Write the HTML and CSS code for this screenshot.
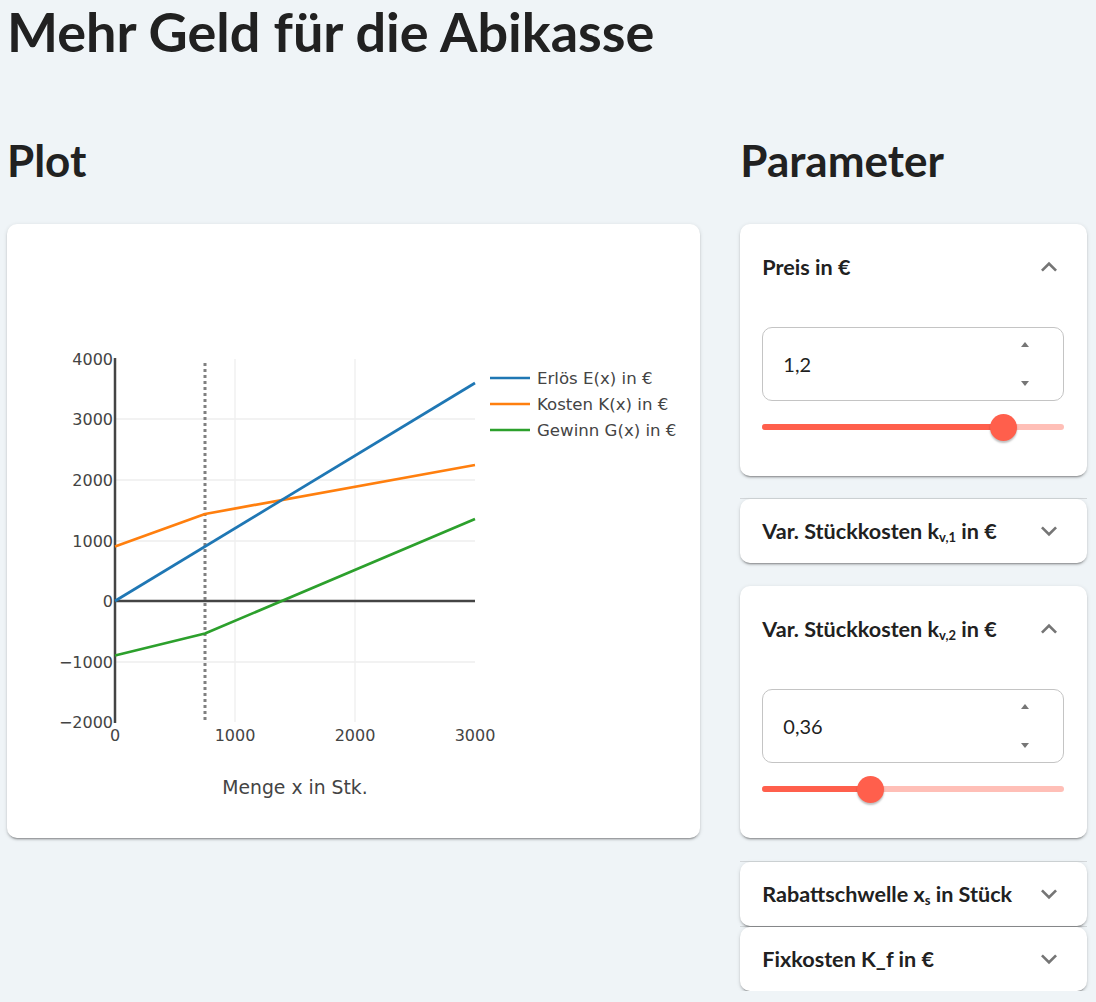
FILE: index.html
```html
<!DOCTYPE html>
<html lang="de">
<head>
<meta charset="utf-8">
<title>Mehr Geld für die Abikasse</title>
<link rel="stylesheet" href="styles.css">
</head>
<body>
<div class="page">
  <h1 class="title">Mehr Geld für die Abikasse</h1>
  <div class="layout">
    <section class="col">
      <h2 class="heading">Plot</h2>
      <div class="plot-card">
        <svg class="plot" width="693" height="614" viewBox="0 0 693 614" xmlns="http://www.w3.org/2000/svg">
          <g transform="translate(-7,-224)">
            <g class="grid">
              <line x1="115" y1="419" x2="475" y2="419"/>
              <line x1="115" y1="480" x2="475" y2="480"/>
              <line x1="115" y1="541" x2="475" y2="541"/>
              <line x1="115" y1="662" x2="475" y2="662"/>
              <line x1="235" y1="359" x2="235" y2="722"/>
              <line x1="355" y1="359" x2="355" y2="722"/>
            </g>
            <line class="axis" x1="115" y1="601" x2="475" y2="601"/>
            <line class="axis" x1="115" y1="358" x2="115" y2="723"/>
            <line class="threshold" x1="205" y1="363" x2="205" y2="722"/>
            <polyline class="s-cost" points="115,546.5 205,514 475,465"/>
            <polyline class="s-rev" points="115,601 475,383"/>
            <polyline class="s-profit" points="115,655.5 205,633.5 475,519"/>
            <g class="ticks-y">
              <text x="113" y="365">4000</text>
              <text x="113" y="425">3000</text>
              <text x="113" y="486">2000</text>
              <text x="113" y="547">1000</text>
              <text x="113" y="607">0</text>
              <text x="113" y="668">−1000</text>
              <text x="113" y="728">−2000</text>
            </g>
            <g class="ticks-x">
              <text x="115" y="741">0</text>
              <text x="235" y="741">1000</text>
              <text x="355" y="741">2000</text>
              <text x="475" y="741">3000</text>
            </g>
            <text class="axis-title" x="295" y="794">Menge x in Stk.</text>
            <g class="legend">
              <line class="s-rev" x1="490" y1="378" x2="530" y2="378"/>
              <text x="537" y="384">Erlös E(x) in €</text>
              <line class="s-cost" x1="490" y1="404" x2="530" y2="404"/>
              <text x="537" y="410">Kosten K(x) in €</text>
              <line class="s-profit" x1="490" y1="430" x2="530" y2="430"/>
              <text x="537" y="436">Gewinn G(x) in €</text>
            </g>
          </g>
        </svg>
      </div>
    </section>
    <section class="col">
      <h2 class="heading">Parameter</h2>
      <div class="accordions">
        <div class="acc acc-open">
          <div class="acc-head">
            <span class="acc-label">Preis in €</span>
            <svg class="chev" viewBox="0 0 24 24"><path d="M12 8l-6 6 1.41 1.41L12 10.83l4.59 4.58L18 14z"/></svg>
          </div>
          <div class="acc-body">
            <div class="num-field">
              <span class="num-value">1,2</span>
              <span class="spin"><span class="spin-up"></span><span class="spin-down"></span></span>
            </div>
            <div class="slider">
              <div class="track"></div>
              <div class="track-fill" style="width: 80%"></div>
              <div class="thumb" style="left: 80%"></div>
            </div>
          </div>
        </div>
        <div class="acc acc-closed acc-divided">
          <div class="acc-head">
            <span class="acc-label">Var. Stückkosten k<sub>v,1</sub> in €</span>
            <svg class="chev" viewBox="0 0 24 24"><path d="M16.59 8.59 12 13.17 7.41 8.59 6 10l6 6 6-6z"/></svg>
          </div>
        </div>
        <div class="acc acc-open">
          <div class="acc-head">
            <span class="acc-label">Var. Stückkosten k<sub>v,2</sub> in €</span>
            <svg class="chev" viewBox="0 0 24 24"><path d="M12 8l-6 6 1.41 1.41L12 10.83l4.59 4.58L18 14z"/></svg>
          </div>
          <div class="acc-body">
            <div class="num-field">
              <span class="num-value">0,36</span>
              <span class="spin"><span class="spin-up"></span><span class="spin-down"></span></span>
            </div>
            <div class="slider">
              <div class="track"></div>
              <div class="track-fill" style="width: 36%"></div>
              <div class="thumb" style="left: 36%"></div>
            </div>
          </div>
        </div>
        <div class="acc acc-closed acc-divided acc-gap">
          <div class="acc-head">
            <span class="acc-label">Rabattschwelle x<sub>s</sub> in Stück</span>
            <svg class="chev" viewBox="0 0 24 24"><path d="M16.59 8.59 12 13.17 7.41 8.59 6 10l6 6 6-6z"/></svg>
          </div>
        </div>
        <div class="acc acc-closed acc-divided acc-tight">
          <div class="acc-head">
            <span class="acc-label">Fixkosten K_f in €</span>
            <svg class="chev" viewBox="0 0 24 24"><path d="M16.59 8.59 12 13.17 7.41 8.59 6 10l6 6 6-6z"/></svg>
          </div>
        </div>
      </div>
    </section>
  </div>
</div>
</body>
</html>
```
FILE: styles.css
```css
* { box-sizing: border-box; }
html, body { margin: 0; padding: 0; }
body {
  background: #eff4f7;
  font-family: Lato, "Noto Sans", sans-serif;
  color: #212121;
}
.page { padding: 0 9px 0 7px; }
.title {
  margin: 0;
  font-size: 54px;
  font-weight: 700;
  line-height: 64px;
  height: 64px;
}
.layout {
  display: grid;
  grid-template-columns: 2fr 1fr;
  column-gap: 40px;
  margin-top: 71px;
}
.heading {
  margin: 0;
  font-size: 44px;
  font-weight: 700;
  line-height: 50px;
  height: 50px;
}
.plot-card {
  margin-top: 39px;
  background: #fff;
  border-radius: 10px;
  height: 614px;
  box-shadow: 0 3px 1px -2px rgba(0,0,0,.2), 0 2px 2px 0 rgba(0,0,0,.14), 0 1px 4px 0 rgba(0,0,0,.12);
  overflow: hidden;
}
.plot { display: block; font-family: "DejaVu Sans", Verdana, sans-serif; }
.grid line { stroke: #eeeeee; stroke-width: 1.3; }
.axis { stroke: #444; stroke-width: 2.5; }
.threshold { stroke: #808080; stroke-width: 3; stroke-dasharray: 3 3; }
.s-rev, .s-cost, .s-profit { fill: none; stroke-width: 2.7; stroke-linejoin: round; }
.s-rev { stroke: #1f77b4; }
.s-cost { stroke: #ff7f0e; }
.s-profit { stroke: #2ca02c; }
.plot text { fill: #444; font-size: 16px; }
.plot .legend text { font-size: 16.6px; }
.ticks-y text { text-anchor: end; }
.ticks-x text { text-anchor: middle; }
.plot .axis-title { text-anchor: middle; font-size: 18.8px; }

.accordions { margin-top: 39px; }
.acc {
  position: relative;
  background: #fff;
  border-radius: 10px;
  box-shadow: 0 3px 1px -2px rgba(0,0,0,.2), 0 2px 2px 0 rgba(0,0,0,.14), 0 1px 4px 0 rgba(0,0,0,.12);
}
.acc + .acc { margin-top: 23px; }
.acc.acc-gap { margin-top: 24px; }
.acc.acc-tight { margin-top: 1px; }
.acc-divided::before {
  content: "";
  position: absolute;
  left: 0; right: 0; top: -1px;
  height: 1px;
  background: rgba(0,0,0,.12);
}
.acc-head {
  display: flex;
  align-items: center;
  justify-content: space-between;
  padding: 0 22px 0 22px;
}
.acc-open .acc-head { height: 86px; }
.acc-closed .acc-head { height: 64px; }
.acc-label {
  font-size: 21.6px;
  font-weight: 700;
}
.acc-label sub {
  font-size: 13px;
  vertical-align: -3px;
  line-height: 0;
  font-weight: 700;
}
.chev { width: 32px; height: 32px; fill: #757575; flex: none; }
.acc-body { padding: 17px 23px 36px 22px; }
.num-field {
  position: relative;
  height: 74px;
  border: 1px solid #c4c4c4;
  border-radius: 10px;
  display: flex;
  align-items: center;
  padding-left: 20px;
}
.num-value { font-size: 20px; color: #1f1f1f; }
.spin {
  position: absolute;
  right: 34px;
  top: 14px;
  bottom: 14px;
  display: flex;
  flex-direction: column;
  justify-content: space-between;
}
.spin-up, .spin-down {
  width: 0; height: 0;
  border-left: 4.5px solid transparent;
  border-right: 4.5px solid transparent;
}
.spin-up { border-bottom: 5px solid #767676; }
.spin-down { border-top: 5px solid #767676; }
.slider {
  position: relative;
  height: 26px;
  margin-top: 13px;
}
.track, .track-fill {
  position: absolute;
  left: 0;
  top: 10px;
  height: 6px;
  border-radius: 3px;
}
.track { right: 0; background: #ffbfb7; }
.track-fill { background: #ff5f4c; }
.thumb {
  position: absolute;
  top: 0;
  width: 27px;
  height: 27px;
  margin-left: -14px;
  border-radius: 50%;
  background: #ff5f4c;
  box-shadow: 0 2px 2px rgba(0,0,0,.25);
}
```
